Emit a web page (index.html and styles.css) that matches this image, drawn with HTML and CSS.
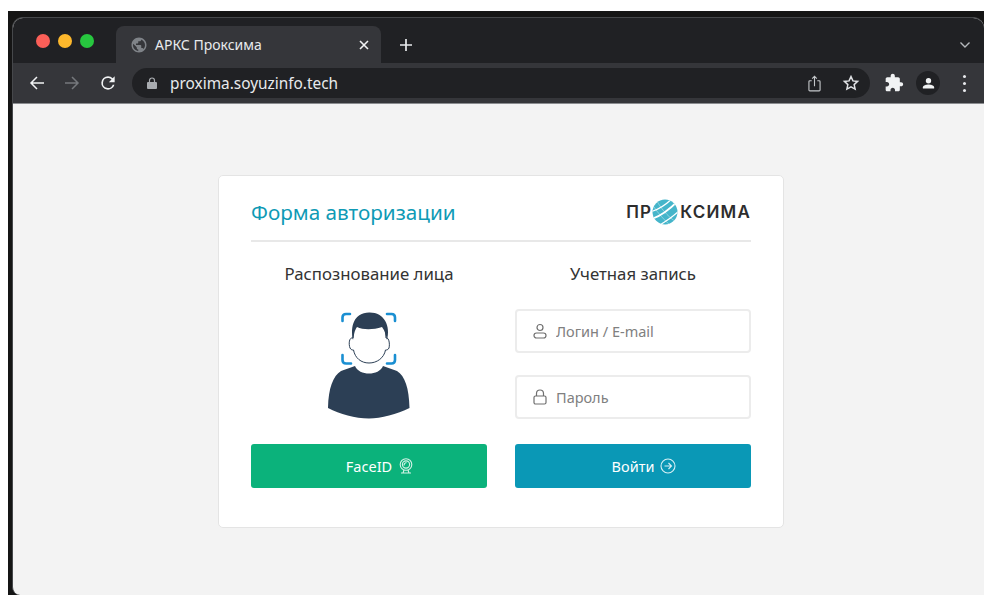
FILE: index.html
```html
<!DOCTYPE html>
<html lang="ru">
<head>
<meta charset="utf-8">
<title>АРКС Проксима</title>
<link rel="stylesheet" href="styles.css">
</head>
<body>
<div class="desktop">
  <div class="window">
    <header class="titlebar">
      <div class="lights"><i class="light red"></i><i class="light amber"></i><i class="light green"></i></div>
      <div class="tab">
        <svg class="favicon" viewBox="0 0 24 24"><path fill="#7f8388" d="M12 2C6.48 2 2 6.48 2 12s4.48 10 10 10 10-4.48 10-10S17.52 2 12 2zm-1 17.93c-3.95-.49-7-3.85-7-7.93 0-.62.08-1.21.21-1.79L9 15v1c0 1.1.9 2 2 2v1.93zm6.9-2.54c-.26-.81-1-1.39-1.9-1.39h-1v-3c0-.55-.45-1-1-1H8v-2h2c.55 0 1-.45 1-1V7h2c1.1 0 2-.9 2-2v-.41c2.93 1.19 5 4.06 5 7.41 0 2.08-.8 3.97-2.1 5.39z"/></svg>
        <span class="tab-title">АРКС Проксима</span>
        <svg class="tab-close" viewBox="0 0 10 10"><path d="M1 1l8 8M9 1l-8 8" stroke="#f1f3f4" stroke-width="1.6" fill="none"/></svg>
      </div>
      <svg class="new-tab" viewBox="0 0 14 14"><path d="M7 1v12M1 7h12" stroke="#e8eaed" stroke-width="1.7" fill="none"/></svg>
      <svg class="tab-menu" viewBox="0 0 12 8"><path d="M1.5 1.5L6 6l4.500-4.500" stroke="#b5b8bc" stroke-width="1.400" fill="none"/></svg>
    </header>
    <nav class="toolbar">
      <svg class="nav-icon" viewBox="0 0 16 16"><path d="M15 8H2M8 2L2 8l6 6" stroke="#f1f3f4" stroke-width="1.500" fill="none"/></svg>
      <svg class="nav-icon" viewBox="0 0 16 16"><path d="M1 8h13M8 2l6 6-6 6" stroke="#75787c" stroke-width="1.500" fill="none"/></svg>
      <svg class="nav-icon reload" viewBox="0 0 24 24"><path fill="#f1f3f4" d="M17.650 6.350A7.950 7.950 0 0 0 12 4a8 8 0 1 0 7.730 10h-2.080A6 6 0 1 1 12 6c1.660 0 3.140.690 4.220 1.780L13 11h7V4l-2.350 2.350z"/></svg>
      <div class="omnibox">
        <svg class="lock" viewBox="0 0 10 12"><path fill="#a8abaf" d="M1 5h8a1 1 0 0 1 1 1v5a1 1 0 0 1-1 1H1a1 1 0 0 1-1-1V6a1 1 0 0 1 1-1z"/><path d="M2.500 5V3.500a2.500 2.500 0 0 1 5 0V5" stroke="#a8abaf" stroke-width="1.200" fill="none"/></svg>
        <span class="url">proxima.soyuzinfo.tech</span>
        <svg class="share" viewBox="0 0 14 18"><path d="M4 6H2a1 1 0 0 0-1 1v9a1 1 0 0 0 1 1h10a1 1 0 0 0 1-1V7a1 1 0 0 0-1-1h-2M7 12V1.500M4.500 3.800L7 1.300l2.500 2.500" stroke="#c4c7ca" stroke-width="1.200" fill="none"/></svg>
        <svg class="star" viewBox="0 0 24 24"><path d="M12 3.500l2.600 5.700 6.200.7-4.600 4.200 1.300 6.100L12 17.200l-5.500 3 1.300-6.100-4.600-4.200 6.200-.7z" stroke="#dfe1e4" stroke-width="2" fill="none"/></svg>
      </div>
      <svg class="puzzle" viewBox="0 0 24 24"><path fill="#f1f3f4" d="M20.500 11H19V7c0-1.100-.9-2-2-2h-4V3.500C13 2.120 11.880 1 10.500 1S8 2.120 8 3.500V5H4c-1.100 0-1.990.9-1.990 2v3.800H3.500c1.490 0 2.700 1.210 2.700 2.700s-1.210 2.700-2.700 2.700H2V20c0 1.100.9 2 2 2h3.800v-1.500c0-1.490 1.210-2.700 2.700-2.700 1.490 0 2.700 1.210 2.700 2.700V22H17c1.100 0 2-.9 2-2v-4h1.500c1.380 0 2.500-1.120 2.500-2.500S21.880 11 20.500 11z"/></svg>
      <div class="avatar">
        <svg viewBox="0 0 24 24"><circle cx="12" cy="7.500" r="4.300" fill="#f1f3f4"/><path fill="#f1f3f4" d="M3 20v-2.200c0-3 6-4.300 9-4.300s9 1.300 9 4.300V20z"/></svg>
      </div>
      <div class="kebab"><i></i><i></i><i></i></div>
    </nav>
    <main class="content">
      <section class="card">
        <div class="card-head">
          <h1 class="card-title">Форма авторизации</h1>
          <div class="logo">
            <span>ПР</span>
            <svg class="logo-globe" viewBox="0 0 26 26">
              <defs><clipPath id="globe-clip"><circle cx="13" cy="13" r="12.500"/></clipPath></defs>
              <circle cx="13" cy="13" r="12.500" fill="#45b5ca"/>
              <g clip-path="url(#globe-clip)" stroke="#fff" fill="none">
                <path d="M-2 13C6 11 14 6 23 -3" stroke-width="1.300"/>
                <path d="M0 20C9 17 17 11 26 2" stroke-width="1.800"/>
                <path d="M6 27C13 23 22 17 29 10" stroke-width="1.300"/>
                <path d="M5 2C8 8 15 17 24 23" stroke-width=".7" opacity=".55"/>
                <path d="M2 8C6 14 12 21 18 26" stroke-width=".7" opacity=".55"/>
              </g>
            </svg>
            <span>КСИМА</span>
          </div>
        </div>
        <div class="columns">
          <div class="col">
            <h2 class="col-title">Распознование лица</h2>
            <div class="face-wrap">
              <svg class="face" viewBox="0 0 120 125">
                <path fill="#2c3f55" d="M46 66C50 76 70 76 74 66L88 71C96 76 100 88 100.500 108C88 114 72 118.500 60 118.500C46 118.500 31 114 19 108C19.500 88 24 76 32 71Z"/>
                <path fill="#fff" stroke="#2c3f55" stroke-width="1" d="M44 38C40 37 39.500 44 41 48C42 50 43.500 50 44.500 50C46 58 52 63 60 63C68 63 75 58 76.500 50C77.500 50 79 50 80 48C81 44 80 37 77 38L76 24H45Z"/>
                <path fill="#2c3f55" d="M44 40C41 26 45 13 60 12.500C75 12 82 26 78 40C77 35 76 31 73 27C64 30 54 30 48 27C45 31 45 36 44 40Z"/>
                <g stroke="#1a8fd2" stroke-width="2.600" fill="none" stroke-linecap="round">
                  <path d="M33.500 21V17.500Q33.500 14 37 14H41"/>
                  <path d="M78 14H82.500Q86 14 86 17.500V21"/>
                  <path d="M33.500 55V60Q33.500 63.500 37 63.500H42"/>
                  <path d="M86 55V60Q86 63.500 82.500 63.500H78"/>
                </g>
              </svg>
            </div>
            <button class="btn btn-green" type="button">FaceID
              <svg class="btn-icon" viewBox="0 0 16 16" fill="none" stroke="#d4f2e6" stroke-width="1.100"><circle cx="8" cy="6.500" r="5.800"/><circle cx="8" cy="6.500" r="3.600"/><path d="M6 7.500a3 3 0 0 1 2.500-3"/><path d="M3 15h10M5 15l1-3M11 15l-1-3"/></svg>
            </button>
          </div>
          <form class="col">
            <h2 class="col-title">Учетная запись</h2>
            <label class="field">
              <svg class="field-icon" viewBox="0 0 16 16" fill="none" stroke="#6f6f6f" stroke-width="1.200"><circle cx="8" cy="4.500" r="3"/><rect x="2" y="10" width="12" height="5" rx="2.500"/></svg>
              <input class="field-input" type="text" placeholder="Логин / E-mail">
            </label>
            <label class="field field-gap">
              <svg class="field-icon" viewBox="0 0 16 16" fill="none" stroke="#6f6f6f" stroke-width="1.200"><rect x="2" y="7" width="12" height="8" rx="1.500"/><path d="M4.500 7V4.500a3.500 3.500 0 0 1 7 0V7"/></svg>
              <input class="field-input" type="password" placeholder="Пароль">
            </label>
            <button class="btn btn-blue" type="button">Войти
              <svg class="btn-icon" viewBox="0 0 16 16" fill="none" stroke="#d8f0f5" stroke-width="1.100"><circle cx="8" cy="8" r="7"/><path d="M4.500 8h7M8.500 5l3 3-3 3"/></svg>
            </button>
          </form>
        </div>
      </section>
    </main>
  </div>
</div>
</body>
</html>
```
FILE: styles.css
```css
* { box-sizing: border-box; }

html, body {
  margin: 0;
  height: 100%;
  background: #fff;
  overflow: hidden;
}

body {
  padding: 11px 0 0 8px;
  font-family: "Noto Sans", "Open Sans", sans-serif;
}

.desktop {
  height: 584px;
  padding: 6px 0 0 4px;
  background: #151515;
}

/* Browser window */
.window {
  display: flex;
  flex-direction: column;
  height: 578px;
  overflow: hidden;
  border: 1px solid #46484b;
  border-width: 1px 0 0 1px;
  border-radius: 11px 11px 0 8px;
  background: #f3f3f3;
}

.titlebar {
  display: flex;
  align-items: flex-end;
  flex: none;
  height: 45px;
  background: #202124;
}

.lights {
  display: flex;
  align-self: flex-start;
  gap: 8px;
  width: 103px;
  padding: 16px 0 0 23px;
}

.light {
  width: 14px;
  height: 14px;
  border-radius: 50%;
}
.light.red { background: #fb5f58; }
.light.amber { background: #fdb82c; }
.light.green { background: #27c73f; }

.tab {
  position: relative;
  display: flex;
  align-items: center;
  width: 265px;
  height: 37px;
  padding: 0 12px 0 14px;
  border-radius: 8px 8px 0 0;
  background: #35363a;
}

.favicon { width: 18px; height: 18px; flex: none; }

.tab-title {
  flex: 1;
  margin-left: 7px;
  font-size: 14px;
  color: #e8eaed;
}

.tab-close { width: 10px; height: 10px; flex: none; }

.new-tab {
  align-self: center;
  width: 14px;
  height: 14px;
  margin: 8px 0 0 18px;
}

.tab-menu {
  align-self: center;
  width: 12px;
  height: 8px;
  margin: 9px 13px 0 auto;
}

.toolbar {
  display: flex;
  align-items: center;
  flex: none;
  height: 41px;
  padding-left: 16px;
  border-bottom: 1px solid #8a8c8f;
  background: #35363a;
}

.nav-icon { width: 16px; height: 16px; flex: none; margin-right: 19px; }
.nav-icon.reload { width: 20px; height: 20px; margin: 0 14px 0 -1px; }

.omnibox {
  display: flex;
  align-items: center;
  width: 738px;
  height: 30px;
  padding-left: 15px;
  border-radius: 15px;
  background: #202124;
}

.lock { width: 10px; height: 12px; flex: none; }

.url {
  flex: 1;
  margin-left: 13px;
  font-size: 15.400px;
  color: #e8eaed;
}

.share { width: 13px; height: 17px; flex: none; margin-right: 21px; }
.star { width: 18px; height: 18px; flex: none; margin-right: 10px; }

.puzzle { width: 20px; height: 20px; flex: none; margin-left: 14px; }

.avatar {
  display: flex;
  align-items: center;
  justify-content: center;
  flex: none;
  width: 24px;
  height: 24px;
  margin-left: 12px;
  border-radius: 50%;
  background: #202124;
}
.avatar svg { width: 15px; height: 15px; }

.kebab {
  display: flex;
  flex-direction: column;
  gap: 4px;
  flex: none;
  margin-left: 23px;
}
.kebab i {
  width: 3px;
  height: 3px;
  border-radius: 50%;
  background: #e8eaed;
}

/* Page content */
.content {
  flex: 1;
  padding: 71px 0 0 205px;
}

.card {
  width: 566px;
  height: 353px;
  padding: 0 32px;
  border: 1px solid #e4e4e4;
  border-radius: 5px;
  background: #fff;
}

.card-head {
  display: flex;
  align-items: center;
  justify-content: space-between;
  height: 66px;
  padding-top: 7px;
  border-bottom: 2px solid #e8e8e8;
}

.card-title {
  margin: 0;
  font-size: 20.700px;
  font-weight: 400;
  color: #0f9ab5;
}

.logo {
  display: flex;
  align-items: center;
  font-family: Inter, "Noto Sans", sans-serif;
  font-size: 17px;
  font-weight: 600;
  letter-spacing: 1.200px;
  color: #2d2d2d;
}

.logo-globe { width: 26px; height: 26px; margin: 0 2px 0 0; }

.columns {
  display: grid;
  grid-template-columns: 236px 236px;
  gap: 28px;
}

.col { display: flex; flex-direction: column; margin: 0; }

.col-title {
  margin: 0;
  height: 67px;
  padding-top: 20px;
  font-size: 16.800px;
  font-weight: 400;
  line-height: 24px;
  text-align: center;
  color: #333;
}

.face-wrap {
  display: flex;
  justify-content: center;
  height: 135px;
}
.face { width: 120px; height: 125px; margin-top: -9px; }

.field {
  display: flex;
  align-items: center;
  gap: 8px;
  height: 44px;
  padding-left: 15px;
  border: 2px solid #ececec;
  border-radius: 4px;
  background: #fff;
}
.field-gap { margin-top: 22px; margin-bottom: 25px; }

.field-icon { width: 16px; height: 16px; flex: none; }

.field-input {
  flex: 1;
  min-width: 0;
  padding: 0;
  border: 0;
  outline: 0;
  background: transparent;
  font: 400 14.500px "Noto Sans", "Open Sans", sans-serif;
}
.field-input::placeholder { color: #808080; opacity: 1; }

.btn {
  display: flex;
  align-items: center;
  justify-content: center;
  gap: 6px;
  height: 44px;
  padding: 0 0 0 22px;
  border: 0;
  border-radius: 3px;
  font: 400 14.500px "Noto Sans", "Open Sans", sans-serif;
  color: #fff;
}
.btn-green { background: #0bb27b; }
.btn-blue { background: #0a98b6; }

.btn-icon { width: 16px; height: 16px; flex: none; }
```
